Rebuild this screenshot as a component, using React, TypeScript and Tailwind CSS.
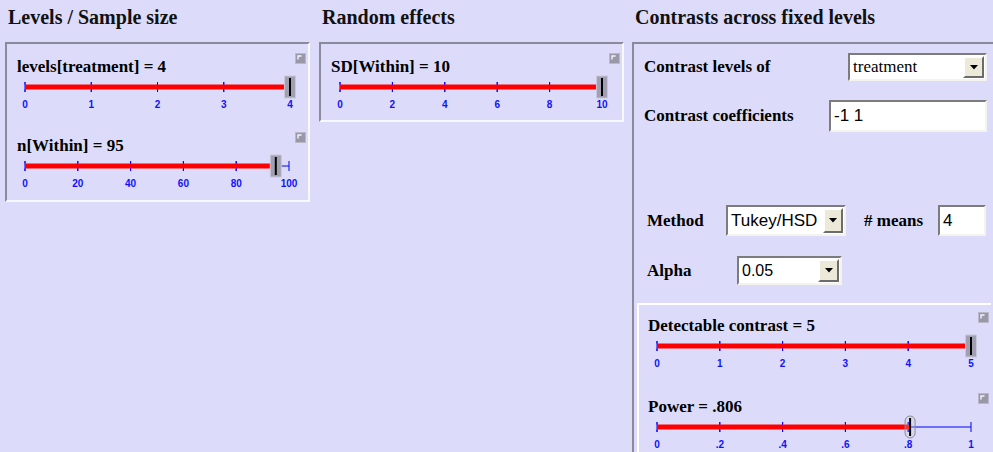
import React from "react";

function CornerButton() {
  return (
    <svg width="11" height="11" viewBox="0 0 11 11" className="block shrink-0">
      <rect x="0.5" y="0.5" width="10" height="10" fill="#9898a8" stroke="#b8b8c8" />
      <path d="M3 6.5V3h3.5" fill="none" stroke="#f4f4ff" strokeWidth="1.4" />
    </svg>
  );
}

type SliderProps = {
  label: string;
  ticks: string[];
  frac: number;
  x0: number;
  x1: number;
  width: number;
  power?: boolean;
  className: string;
  labelClass: string;
};

function Slider({ label, ticks, frac, x0, x1, width, power, className, labelClass }: SliderProps) {
  const tx = x0 + frac * (x1 - x0);
  const n = ticks.length;
  const ty = 13;
  return (
    <div className={"flex flex-col " + className}>
      <div className="flex h-[30px] items-start justify-between pr-[2px]">
        <div className={"mt-[13px] text-[17px] font-bold leading-[20px] text-black font-['Liberation_Serif',serif] " + labelClass}>
          {label}
        </div>
        <div className="mt-[9px]">
          <CornerButton />
        </div>
      </div>
      <svg width={width} height="49" className="block">
        <line x1={x0} y1={ty} x2={x1} y2={ty} stroke="#0000ff" strokeWidth="1" />
        {ticks.map((t, i) => {
          const x = x0 + (i * (x1 - x0)) / (n - 1);
          return (
            <g key={i}>
              <line x1={x} y1={ty - 5} x2={x} y2={ty + 5} stroke="#0000ff" strokeWidth="1" />
              <text
                x={x}
                y={34}
                fontSize="10"
                fontWeight="bold"
                fill="#1010ff"
                textAnchor="middle"
                fontFamily="'Liberation Sans', Arial, sans-serif"
              >
                {t}
              </text>
            </g>
          );
        })}
        <line x1={x0} y1={ty} x2={tx} y2={ty} stroke="#ff0000" strokeWidth="5" />
        {ticks.map((_, i) => {
          const x = x0 + (i * (x1 - x0)) / (n - 1);
          return x < tx ? (
            <g key={"o" + i}>
              <line x1={x} y1={ty - 5} x2={x} y2={ty - 2.5} stroke="#0000ff" strokeWidth="1" />
              <line x1={x} y1={ty + 2.5} x2={x} y2={ty + 5} stroke="#0000ff" strokeWidth="1" />
            </g>
          ) : null;
        })}
        {power ? (
          <g>
            <rect x={tx - 5} y={ty - 11} width="10" height="22" rx="5" fill="rgba(200,200,215,0.25)" stroke="#8c8c8c" strokeWidth="1" />
            <line x1={tx} y1={ty - 9} x2={tx} y2={ty + 9} stroke="#000" strokeWidth="2" />
          </g>
        ) : (
          <g>
            <rect x={tx - 5.5} y={ty - 11} width="11" height="22" fill="#a0a0b2" stroke="#c8c8d8" strokeWidth="1" />
            <line x1={tx} y1={ty - 9} x2={tx} y2={ty + 9} stroke="#000" strokeWidth="2" />
          </g>
        )}
      </svg>
    </div>
  );
}

function ArrowButton({ className }: { className: string }) {
  return (
    <div
      className={
        "flex items-center justify-center border-2 border-t-[#ffffff] border-l-[#ffffff] border-r-[#6c6c6c] border-b-[#6c6c6c] bg-[#ece9d8] " +
        className
      }
    >
      <svg width="8" height="5" viewBox="0 0 8 5">
        <path d="M0 0h8L4 4.5z" fill="#000" />
      </svg>
    </div>
  );
}

function Select({ value, className, textClass, btnClass }: { value: string; className: string; textClass: string; btnClass: string }) {
  return (
    <div className={"flex items-stretch border-2 border-t-[#7c7c7c] border-l-[#7c7c7c] border-r-[#f4f3ee] border-b-[#f4f3ee] bg-white " + className}>
      <div className={"flex flex-1 items-center pl-[3px] text-black " + textClass}>{value}</div>
      <ArrowButton className={btnClass} />
    </div>
  );
}

function Input({ value, className }: { value: string; className: string }) {
  return (
    <div
      className={
        "flex items-center border-2 border-t-[#7c7c7c] border-l-[#7c7c7c] border-r-[#f4f3ee] border-b-[#f4f3ee] bg-white pl-[3px] text-[17px] text-black font-['Liberation_Sans',Arial,sans-serif] " +
        className
      }
    >
      {value}
    </div>
  );
}

const panelBorder =
  "border-2 border-t-[#8a8a9c] border-l-[#8a8a9c] border-r-[#f8f8ff] border-b-[#f8f8ff]";

const headerCls =
  "h-[42px] pt-[7px] pl-[3px] text-[20px] font-bold leading-[20px] text-[#111] font-['Liberation_Serif',serif] whitespace-nowrap";

const labelCls = "text-[17px] font-bold leading-[20px] text-black font-['Liberation_Serif',serif] whitespace-nowrap";

export default function App() {
  return (
    <div className="flex h-[452px] w-[993px] items-start overflow-hidden bg-[#dcdcfa]">
      {/* Column 1 */}
      <div className="ml-[5px] w-[305px] shrink-0">
        <div className={headerCls}>Levels / Sample size</div>
        <div className={"h-[160px] " + panelBorder}>
          <Slider
            label="levels[treatment] = 4"
            ticks={["0", "1", "2", "3", "4"]}
            frac={1}
            x0={18}
            x1={283}
            width={300}
            className="h-[79px]"
            labelClass="pl-[10px]"
          />
          <Slider
            label="n[Within] = 95"
            ticks={["0", "20", "40", "60", "80", "100"]}
            frac={0.95}
            x0={18}
            x1={282}
            width={300}
            className="h-[77px]"
            labelClass="pl-[10px]"
          />
        </div>
      </div>

      {/* Column 2 */}
      <div className="ml-[9px] w-[305px] shrink-0">
        <div className={headerCls + " pl-[2px]"}>Random effects</div>
        <div className={"h-[80px] " + panelBorder}>
          <Slider
            label="SD[Within] = 10"
            ticks={["0", "2", "4", "6", "8", "10"]}
            frac={1}
            x0={19}
            x1={281}
            width={300}
            className="h-[76px]"
            labelClass="pl-[10px]"
          />
        </div>
      </div>

      {/* Column 3 */}
      <div className="ml-[8px] w-[365px] shrink-0">
        <div className={headerCls}>Contrasts across fixed levels</div>
        <div className={"flex h-[430px] flex-col " + panelBorder}>
          <div className="mt-[9px] flex h-[28px] items-center pl-[10px]">
            <div className={"w-[204px] " + labelCls}>Contrast levels of</div>
            <Select
              value="treatment"
              className="h-[28px] w-[139px]"
              textClass="text-[17px] font-['Liberation_Serif',serif]"
              btnClass="my-[1px] mr-[1px] w-[21px]"
            />
          </div>
          <div className="mt-[19px] flex h-[32px] items-center pl-[10px]">
            <div className={"w-[185px] " + labelCls}>Contrast coefficients</div>
            <Input value="-1 1" className="h-[32px] w-[158px]" />
          </div>
          <div className="mt-[73px] flex h-[31px] items-center pl-[13px]">
            <div className={"w-[79px] " + labelCls}>Method</div>
            <Select
              value="Tukey/HSD"
              className="h-[31px] w-[120px]"
              textClass="text-[17px] font-['Liberation_Sans',Arial,sans-serif]"
              btnClass="my-[1px] mr-[1px] w-[20px]"
            />
            <div className={"ml-[18px] w-[74px] " + labelCls}># means</div>
            <Input value="4" className="h-[31px] w-[48px]" />
          </div>
          <div className="mt-[20px] flex h-[29px] items-center pl-[13px]">
            <div className={"w-[90px] " + labelCls}>Alpha</div>
            <Select
              value="0.05"
              className="h-[29px] w-[105px]"
              textClass="text-[16px] font-['Liberation_Sans',Arial,sans-serif]"
              btnClass="my-[1px] mr-[1px] w-[21px]"
            />
          </div>
          <div className="ml-[3px] mt-[18px] w-[354px] flex-1 border-l-2 border-t-2 border-white">
            <div className="-mt-[2px]">
              <Slider
                label="Detectable contrast = 5"
                ticks={["0", "1", "2", "3", "4", "5"]}
                frac={1}
                x0={18}
                x1={332}
                width={350}
                className="h-[81px]"
                labelClass="pl-[9px]"
              />
              <Slider
                label="Power = .806"
                ticks={["0", ".2", ".4", ".6", ".8", "1"]}
                frac={0.806}
                x0={18}
                x1={332}
                width={350}
                power
                className="h-[79px]"
                labelClass="pl-[9px]"
              />
            </div>
          </div>
        </div>
      </div>
    </div>
  );
}
